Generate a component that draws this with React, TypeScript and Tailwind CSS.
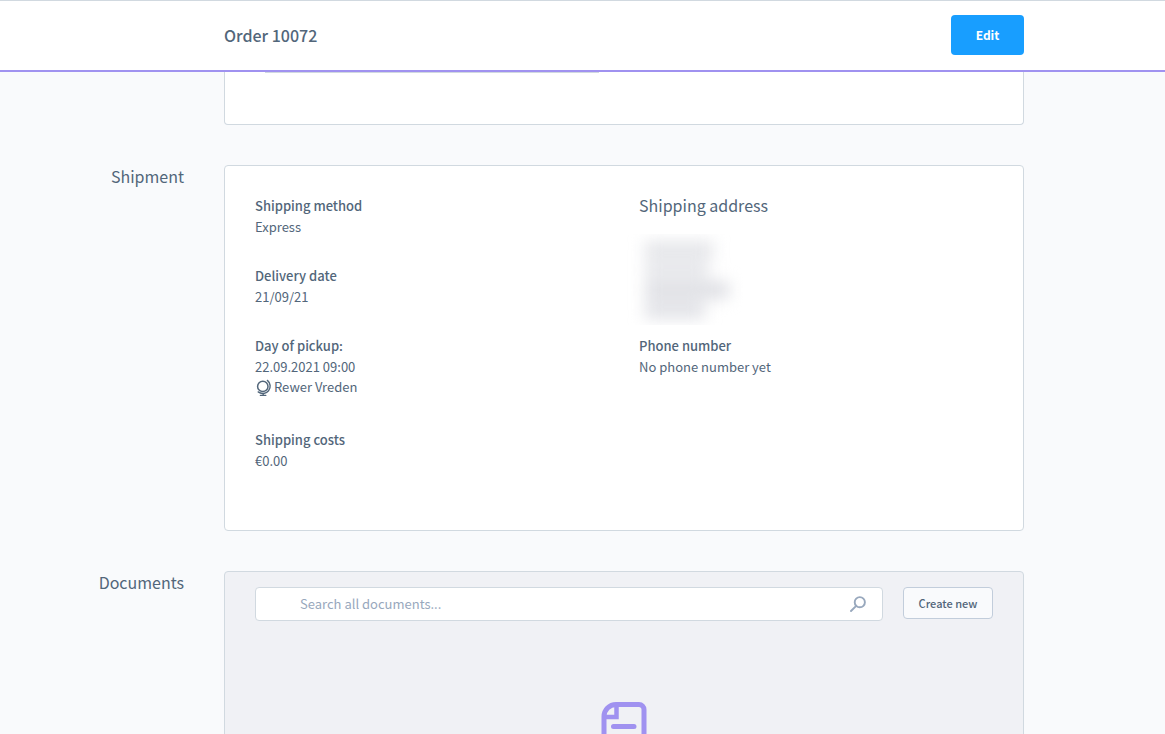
import type { ReactNode } from "react";

function Section({ title, children }: { title: string; children: ReactNode }) {
  return (
    <section className="grid grid-cols-[184px_minmax(0,1fr)] gap-10">
      <h2 className="text-right text-[16px] leading-[22px]">{title}</h2>
      {children}
    </section>
  );
}

function Field({ label, children }: { label: string; children: ReactNode }) {
  return (
    <div>
      <dt className="pb-0.5 font-medium leading-[19px]">{label}</dt>
      <dd className="leading-5">{children}</dd>
    </div>
  );
}

function GlobeIcon() {
  return (
    <svg className="h-[18px] w-4 shrink-0" viewBox="0 0 16 18" fill="none" stroke="#52667a" aria-hidden="true">
      <circle cx="6.800" cy="7.400" r="5.200" strokeWidth="1.5" />
      <path d="M11.400 1.400A7.300 7.300 0 0 1 2.200 12.900" strokeWidth="1.400" strokeLinecap="round" />
      <path d="M7.200 14.500V16.200M4.400 16.400h5.400" strokeWidth="1.300" strokeLinecap="round" />
    </svg>
  );
}

function SearchIcon() {
  return (
    <svg className="size-4" viewBox="0 0 16 16" fill="none" stroke="#98a8bd" strokeWidth="1.9" aria-hidden="true">
      <circle cx="9.8" cy="6.2" r="5.1" />
      <path d="M6.2 9.8L1 15" strokeLinecap="round" />
    </svg>
  );
}

function DocumentIcon() {
  return (
    <svg className="h-[58px] w-[46px]" viewBox="0 0 46 58" fill="none" stroke="#a092f0" strokeWidth="5" aria-hidden="true">
      <path d="M15 2.5H38a5 5 0 0 1 5 5V50a5 5 0 0 1-5 5H8a5 5 0 0 1-5-5V14.500A12 12 0 0 1 15 2.500Z" />
      <path d="M15.500 2.500V15H3" strokeWidth="4.500" />
      <path d="M12.500 24.500H33M12.500 36H33" strokeLinecap="round" />
    </svg>
  );
}

export default function App() {
  return (
    <div className="flex h-screen flex-col overflow-hidden bg-[#f9fafc] font-['Noto_Sans_CJK_SC',sans-serif] text-[13px] text-[#52667a]">
      <header className="flex h-[72px] shrink-0 items-center justify-between border-t border-b-2 border-t-[#d1d9e0] border-b-[#a092f0] bg-white pr-[141px] pb-px pl-[224px]">
        <h1 className="text-[16px] font-medium">Order 10072</h1>
        <button type="button" className="h-10 min-w-[73px] rounded bg-[#189eff] px-4 text-[12px] font-bold text-white">
          Edit
        </button>
      </header>

      <main className="flex min-h-0 flex-1 flex-col gap-10 overflow-hidden pr-[141px]">
        <div className="ml-[224px] h-[53px] shrink-0 rounded-b border border-t-0 border-[#d1d9e0] bg-white">
          <div className="ml-10 h-px w-[334px] bg-[#d1d9e0]" />
        </div>

        <Section title="Shipment">
          <div className="grid grid-cols-2 gap-x-[30px] rounded border border-[#d1d9e0] bg-white px-[30px] pt-[30px] pb-[59px]">
            <dl className="flex flex-col gap-[29px]">
              <Field label="Shipping method">Express</Field>
              <Field label="Delivery date">21/09/21</Field>
              <Field label="Day of pickup:">
                22.09.2021 09:00
                <span className="flex gap-0.5 pb-1 pl-px">
                  <span className="flex h-5 items-end">
                    <GlobeIcon />
                  </span>
                  Rewer Vreden
                </span>
              </Field>
              <Field label="Shipping costs">€0.00</Field>
            </dl>
            <div>
              <h3 className="text-[16px] leading-[18px]">Shipping address</h3>
              <div className="mt-5 mb-[11px] -ml-4 h-[91px] w-[120px] overflow-hidden" aria-hidden="true">
                <div className="flex flex-col gap-1 pt-2 pl-[22px] blur-[8px]">
                  <div className="h-4 w-[68px] bg-[#e2e3e7]" />
                  <div className="h-4 w-16 bg-[#e4e5e9]" />
                  <div className="h-4 w-[84px] bg-[#dcdde2]" />
                  <div className="h-4 w-[60px] bg-[#dfe0e5]" />
                </div>
              </div>
              <dl>
                <Field label="Phone number">No phone number yet</Field>
              </dl>
            </div>
          </div>
        </Section>

        <Section title="Documents">
          <div className="rounded border border-[#d1d9e0] bg-[#f0f1f5] px-[30px] pt-[15px] pb-10">
            <div className="flex items-start gap-5">
              <label className="flex h-[34px] flex-1 items-center rounded border border-[#d1d9e0] bg-white pr-4 pl-11">
                <input
                  type="text"
                  aria-label="Search all documents"
                  placeholder="Search all documents..."
                  className="min-w-0 flex-1 bg-transparent outline-none placeholder:text-[#98a8bd]"
                />
                <SearchIcon />
              </label>
              <button type="button" className="h-8 min-w-[90px] rounded border border-[#c2cddb] bg-[#f9fafc] px-3.5 pb-px text-[11px] leading-4 font-medium">
                Create new
              </button>
            </div>
            <div className="mt-[81px] flex justify-center">
              <DocumentIcon />
            </div>
          </div>
        </Section>
      </main>
    </div>
  );
}
